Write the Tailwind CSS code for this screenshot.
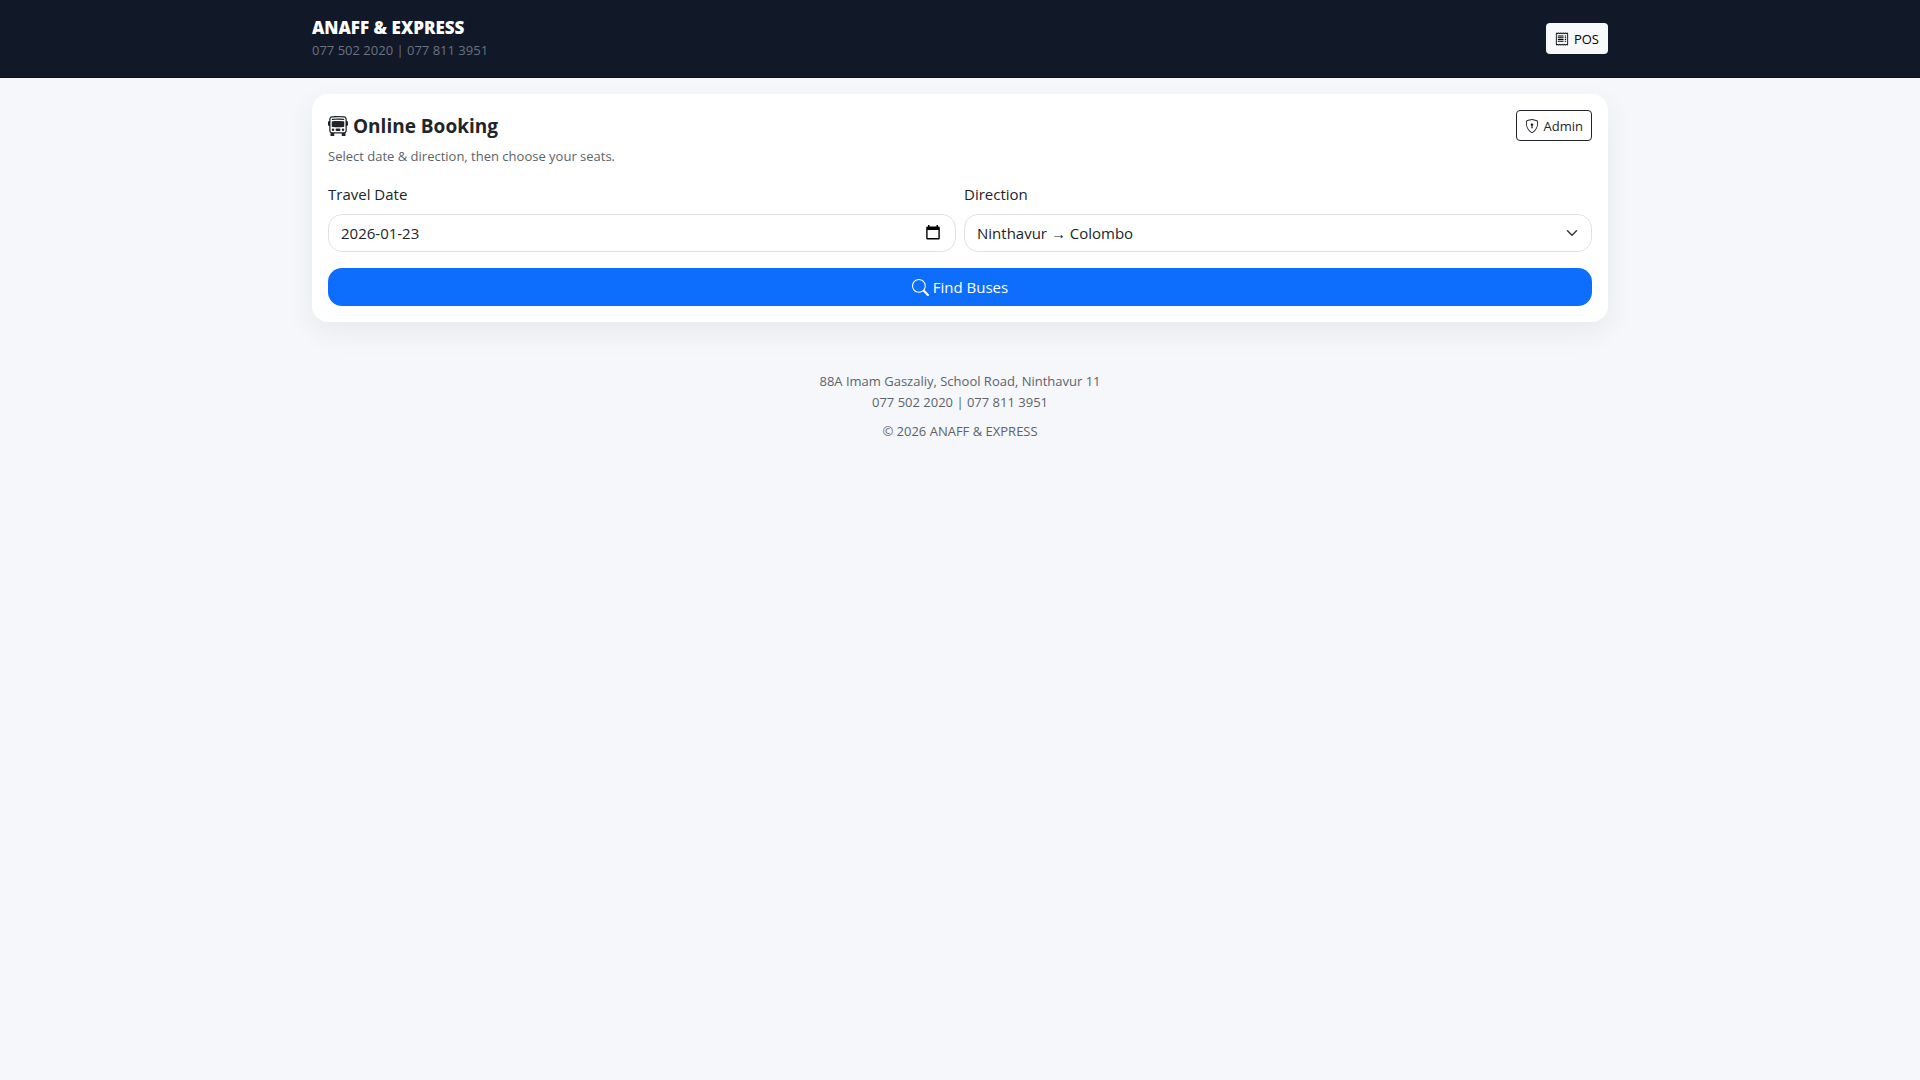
<!DOCTYPE html>
<html lang="en">
<head>
    <meta charset="UTF-8">
    <meta name="viewport" content="width=device-width, initial-scale=1.0">
    <title>ANAFF &amp; EXPRESS - Online Booking</title>
    <script src="https://cdn.jsdelivr.net/npm/@tailwindcss/browser@4"></script>
</head>
<body class="min-h-screen bg-[#f5f7fb] font-['Segoe_UI','Open_Sans','Noto_Sans',sans-serif] text-[15px] leading-6 text-[#212529]">
    <header class="bg-[#111827] border-b border-[#0b1220]">
        <div class="max-w-[1320px] mx-auto px-3 py-4 flex items-center justify-between">
            <div>
                <div class="text-[17px] leading-6 font-extrabold text-white">ANAFF &amp; EXPRESS</div>
                <div class="text-[13px] leading-[21px] text-[#6b7280]">077 502 2020 | 077 811 3951</div>
            </div>
            <a href="#pos" class="h-[31px] px-[9px] flex items-center gap-[5px] rounded bg-[#f8f9fa] text-[13px] text-black hover:bg-gray-200">
                <svg class="size-[14px]" viewBox="0 0 16 16" fill="currentColor" aria-hidden="true">
                    <path d="M1.92.506a.5.5 0 0 1 .434.14L3 1.293l.646-.647a.5.5 0 0 1 .708 0L5 1.293l.646-.647a.5.5 0 0 1 .708 0L7 1.293l.646-.647a.5.5 0 0 1 .708 0L9 1.293l.646-.647a.5.5 0 0 1 .708 0l.646.647.646-.647a.5.5 0 0 1 .708 0l.646.647.646-.647a.5.5 0 0 1 .801.13l.5 1A.5.5 0 0 1 15 2v12a.5.5 0 0 1-.053.224l-.5 1a.5.5 0 0 1-.8.13L13 14.707l-.646.647a.5.5 0 0 1-.708 0L11 14.707l-.646.647a.5.5 0 0 1-.708 0L9 14.707l-.646.647a.5.5 0 0 1-.708 0L7 14.707l-.646.647a.5.5 0 0 1-.708 0L5 14.707l-.646.647a.5.5 0 0 1-.708 0L3 14.707l-.646.647a.5.5 0 0 1-.801-.13l-.5-1A.5.5 0 0 1 1 14V2a.5.5 0 0 1 .053-.224l.5-1a.5.5 0 0 1 .367-.27m.217 1.338L2 2.118v11.764l.137.274.51-.51a.5.5 0 0 1 .707 0l.646.647.646-.646a.5.5 0 0 1 .708 0l.646.646.646-.646a.5.5 0 0 1 .708 0l.646.646.646-.646a.5.5 0 0 1 .708 0l.646.646.646-.646a.5.5 0 0 1 .708 0l.646.646.646-.646a.5.5 0 0 1 .708 0l.509.509.137-.274V2.118l-.137-.274-.51.51a.5.5 0 0 1-.707 0L12 1.707l-.646.647a.5.5 0 0 1-.708 0L10 1.707l-.646.647a.5.5 0 0 1-.708 0L8 1.707l-.646.647a.5.5 0 0 1-.708 0L6 1.707l-.646.647a.5.5 0 0 1-.708 0L4 1.707l-.646.647a.5.5 0 0 1-.708 0z"/>
                    <path d="M3 4.5a.5.5 0 0 1 .5-.5h6a.5.5 0 1 1 0 1h-6a.5.5 0 0 1-.5-.5m0 2a.5.5 0 0 1 .5-.5h6a.5.5 0 1 1 0 1h-6a.5.5 0 0 1-.5-.5m0 2a.5.5 0 0 1 .5-.5h6a.5.5 0 1 1 0 1h-6a.5.5 0 0 1-.5-.5m0 2a.5.5 0 0 1 .5-.5h6a.5.5 0 0 1 0 1h-6a.5.5 0 0 1-.5-.5m8-6a.5.5 0 0 1 .5-.5h1a.5.5 0 0 1 0 1h-1a.5.5 0 0 1-.5-.5m0 2a.5.5 0 0 1 .5-.5h1a.5.5 0 0 1 0 1h-1a.5.5 0 0 1-.5-.5m0 2a.5.5 0 0 1 .5-.5h1a.5.5 0 0 1 0 1h-1a.5.5 0 0 1-.5-.5m0 2a.5.5 0 0 1 .5-.5h1a.5.5 0 0 1 0 1h-1a.5.5 0 0 1-.5-.5"/>
                </svg>
                POS
            </a>
        </div>
    </header>

    <main class="max-w-[1320px] mx-auto px-3 pt-4">
        <!-- Booking search -->
        <section class="bg-white rounded-2xl p-4 shadow-[0_10px_30px_rgba(0,0,0,0.06)]">
            <div class="flex items-center justify-between">
                <h1 class="flex items-center gap-[5px] text-[19px] leading-6 font-bold">
                    <svg class="size-5" viewBox="0 0 16 16" fill="currentColor" aria-hidden="true">
                        <path d="M5 11a1 1 0 1 1-2 0 1 1 0 0 1 2 0m8 0a1 1 0 1 1-2 0 1 1 0 0 1 2 0m-6-1a1 1 0 1 0 0 2h2a1 1 0 1 0 0-2zm1-6c-1.876 0-3.426.109-4.552.226A.5.5 0 0 0 3 4.723v3.554a.5.5 0 0 0 .448.497C4.574 8.891 6.124 9 8 9s3.426-.109 4.552-.226A.5.5 0 0 0 13 8.277V4.723a.5.5 0 0 0-.448-.497A44 44 0 0 0 8 4m0-1c-1.837 0-3.353.107-4.448.22a.5.5 0 1 1-.104-.994A44 44 0 0 1 8 2c1.876 0 3.426.109 4.552.226a.5.5 0 1 1-.104.994A43 43 0 0 0 8 3"/>
                        <path d="M15 8a1 1 0 0 0 1-1V5a1 1 0 0 0-1-1V2.64c0-1.188-.845-2.232-2.064-2.372A44 44 0 0 0 8 0C5.9 0 4.208.136 3.064.268 1.845.408 1 1.452 1 2.64V4a1 1 0 0 0-1 1v2a1 1 0 0 0 1 1v3.5c0 .818.393 1.544 1 2v2a.5.5 0 0 0 .5.5h2a.5.5 0 0 0 .5-.5V14h6v1.5a.5.5 0 0 0 .5.5h2a.5.5 0 0 0 .5-.5v-2c.607-.456 1-1.182 1-2zM8 1c2.056 0 3.71.134 4.822.261.676.078 1.178.66 1.178 1.379v8.86a1.5 1.5 0 0 1-1.5 1.5h-9A1.5 1.5 0 0 1 2 11.5V2.64c0-.72.502-1.301 1.178-1.379A43 43 0 0 1 8 1"/>
                    </svg>
                    Online Booking
                </h1>
                <a href="#admin" class="h-[31px] px-2 flex items-center gap-[5px] rounded border border-[#212529] text-[13px] hover:bg-gray-100">
                    <svg class="size-[14px]" viewBox="0 0 16 16" fill="currentColor" aria-hidden="true">
                        <path d="M5.338 1.59a61 61 0 0 0-2.837.856.48.48 0 0 0-.328.39c-.554 4.157.726 7.19 2.253 9.188a10.7 10.7 0 0 0 2.287 2.233c.346.244.652.42.893.533q.18.085.293.118a1 1 0 0 0 .101.025 1 1 0 0 0 .1-.025q.114-.034.294-.118c.24-.113.547-.29.893-.533a10.7 10.7 0 0 0 2.287-2.233c1.527-1.997 2.807-5.031 2.253-9.188a.48.48 0 0 0-.328-.39c-.651-.213-1.75-.56-2.837-.855C9.552 1.29 8.531 1.067 8 1.067c-.53 0-1.552.223-2.662.524zM5.072.56C6.157.265 7.31 0 8 0s1.843.265 2.928.56c1.11.3 2.229.655 2.887.87a1.54 1.54 0 0 1 1.044 1.262c.596 4.477-.787 7.795-2.465 9.99a11.8 11.8 0 0 1-2.517 2.453 7 7 0 0 1-1.048.625c-.28.132-.581.24-.829.24s-.548-.108-.829-.24a7 7 0 0 1-1.048-.625 11.8 11.8 0 0 1-2.517-2.453C1.928 10.487.545 7.169 1.141 2.692A1.54 1.54 0 0 1 2.185 1.43 63 63 0 0 1 5.072.56"/>
                        <path d="M9.5 6.5a1.5 1.5 0 0 1-1 1.415l.385 1.99a.5.5 0 0 1-.491.595h-.788a.5.5 0 0 1-.49-.595l.384-1.99a1.5 1.5 0 1 1 2-1.415"/>
                    </svg>
                    Admin
                </a>
            </div>
            <p class="mt-[5px] mb-[15px] text-[13px] leading-[21px] text-[#5c636a]">Select date &amp; direction, then choose your seats.</p>

            <form class="grid grid-cols-1 md:grid-cols-2 gap-x-2 gap-y-4">
                <div>
                    <label for="travelDate" class="block mb-2">Travel Date</label>
                    <div class="relative">
                        <input type="text" id="travelDate" value="2026-01-23" class="w-full h-[38px] px-3 bg-white border border-[#dee2e6] rounded-[14px]">
                        <button type="button" aria-label="Open calendar" class="absolute right-4 top-[11px]">
                            <svg class="w-[14px] h-[15px]" viewBox="0 0 14 15" fill="#000" aria-hidden="true">
                                <path fill-rule="evenodd" d="M2 0h1.500v1.500h7V0H12v1.500h.500A1.300 1.300 0 0 1 13.800 2.800v10.400a1.300 1.300 0 0 1-1.300 1.300h-11A1.300 1.300 0 0 1 .200 13.200V2.800A1.300 1.300 0 0 1 1.500 1.500H2zM1.600 5v8.100h10.800V5z"/>
                            </svg>
                        </button>
                    </div>
                </div>
                <div>
                    <label for="direction" class="block mb-2">Direction</label>
                    <div class="relative">
                        <select id="direction" class="w-full h-[38px] pl-3 pr-9 appearance-none bg-white border border-[#dee2e6] rounded-[14px]">
                            <option>Ninthavur → Colombo</option>
                            <option>Colombo → Ninthavur</option>
                        </select>
                        <svg class="absolute right-3 top-[13px] w-4 h-3 pointer-events-none" viewBox="0 0 16 16" fill="none" stroke="#343a40" stroke-width="2" stroke-linecap="round" stroke-linejoin="round" aria-hidden="true">
                            <path d="m2 5 6 6 6-6"/>
                        </svg>
                    </div>
                </div>
                <button type="submit" class="md:col-span-2 h-[38px] flex items-center justify-center gap-1 rounded-[14px] bg-[#0d6efd] text-white hover:bg-[#0b5ed7]">
                    <svg class="size-[17px]" viewBox="0 0 16 16" fill="currentColor" aria-hidden="true">
                        <path d="M11.742 10.344a6.500 6.500 0 1 0-1.397 1.398h-.001q.044.060.098.115l3.850 3.850a1 1 0 0 0 1.415-1.414l-3.850-3.850a1 1 0 0 0-.115-.100zM12 6.500a5.500 5.500 0 1 1-11 0 5.500 5.500 0 0 1 11 0"/>
                    </svg>
                    Find Buses
                </button>
            </form>
        </section>
    </main>

    <footer class="mt-[49px] pb-6 text-center text-[13px] leading-[21px] text-[#5c636a]">
        <p>88A Imam Gaszaliy, School Road, Ninthavur 11</p>
        <p>077 502 2020 | 077 811 3951</p>
        <p class="mt-2">© 2026 ANAFF &amp; EXPRESS</p>
    </footer>
</body>
</html>
